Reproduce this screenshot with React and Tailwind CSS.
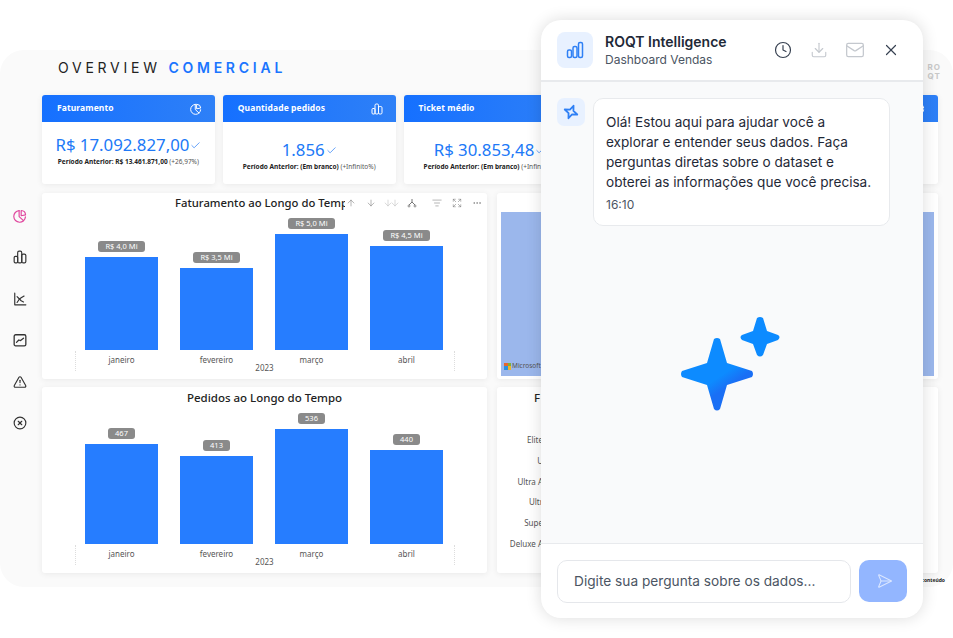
import React from "react";
import { Clock, Download, Mail, X, ArrowUp, ArrowDown, ListFilter, Expand, Ellipsis, Send, Check, TriangleAlert, CircleX } from "lucide-react";

const Sparkle = ({ className }) => (
  <svg viewBox="0 0 24 24" className={className} fill="none" stroke="currentColor" strokeWidth="2.4" strokeLinejoin="round" strokeLinecap="round">
    <path d="M12 3 L14.5 9.5 L21 12 L14.5 14.5 L12 21 L9.5 14.5 L3 12 L9.5 9.5 Z" transform="rotate(22 12 12)" />
  </svg>
);

const PieIcon = ({ size = 14, className }) => (
  <svg width={size} height={size} viewBox="0 0 24 24" fill="none" stroke="currentColor" strokeWidth="2" strokeLinecap="round" strokeLinejoin="round" className={className}>
    <path d="M10.5 2.7A10 10 0 1 0 21.3 13.5" />
    <path d="M14 2.5a8 8 0 0 1 7.5 7.5L14 11.5z" />
    <path d="M10.5 2.7V13L18 20" />
  </svg>
);

const BarsIcon = ({ size = 14, className }) => (
  <svg width={size} height={size} viewBox="0 0 24 24" fill="none" stroke="currentColor" strokeWidth="2" strokeLinejoin="round" className={className}>
    <rect x="2" y="11" width="6" height="11" rx="2" />
    <rect x="8" y="2" width="7" height="20" rx="2.5" />
    <rect x="15" y="7" width="7" height="15" rx="2.5" />
  </svg>
);

const CrossChartIcon = ({ size = 14, className }) => (
  <svg width={size} height={size} viewBox="0 0 24 24" fill="none" stroke="currentColor" strokeWidth="2" strokeLinecap="round" strokeLinejoin="round" className={className}>
    <path d="M3 2v20h19" />
    <path d="M7 8l4 4 3 3 4 2" />
    <path d="M7 18l4-6 3-2 5-3" />
  </svg>
);

const FrameChartIcon = ({ size = 14, className }) => (
  <svg width={size} height={size} viewBox="0 0 24 24" fill="none" stroke="currentColor" strokeWidth="2.2" strokeLinecap="round" strokeLinejoin="round" className={className}>
    <rect x="2" y="3" width="20" height="19" rx="2.5" />
    <path d="M6 16l4-4 3 1 5-4" />
  </svg>
);

const cards = [
  { title: "Faturamento", value: "R$ 17.092.827,00", prev: "Período Anterior: R$ 13.461.871,00", delta: "(+26,97%)", Icon: PieIcon, pad: "pt-[10px]" },
  { title: "Quantidade pedidos", value: "1.856", prev: "Período Anterior: (Em branco)", delta: "(+Infinito%)", Icon: BarsIcon, pad: "pt-[15px]" },
  { title: "Ticket médio", value: "R$ 30.853,48", prev: "Período Anterior: (Em branco)", delta: "(+Infinito%)", Icon: BarsIcon, pad: "pt-[15px]" },
  { title: "", value: "", prev: "", delta: "", Icon: null },
  { title: "", value: "", prev: "", delta: "", Icon: PieIcon },
];

const KpiCard = ({ c }) => (
  <div className="h-[89px] rounded-[3px] bg-white shadow-[0_1px_6px_rgba(0,0,0,0.07)] overflow-hidden">
    <div className="h-[27px] bg-linear-to-r from-[#1570ff] to-[#2e80f7] flex items-center justify-between pl-[15px] pr-[13px] text-white">
      <span className="text-[8.5px] font-bold tracking-[0.1px] whitespace-nowrap">{c.title}</span>
      {c.Icon && <c.Icon size={12} />}
    </div>
    {c.value && (
      <div className={`flex flex-col items-center ${c.pad}`}>
        <div className="flex items-center text-[#2079f7] text-[16.8px] leading-[26px] whitespace-nowrap">
          {c.value}
          <Check size={11} strokeWidth={1.5} className="ml-[1px]" />
        </div>
        <div className="text-[6.5px] leading-[10px] text-[#222] whitespace-nowrap -mt-[1px]">
          <span className="font-bold">{c.prev}</span> <span className="text-[#555]">{c.delta}</span>
        </div>
      </div>
    )}
  </div>
);

const Bar = ({ label, month, h }) => (
  <div className="w-[73px] flex flex-col items-center justify-end">
    <div className="px-[7px] h-[11px] text-center rounded-[3px] bg-[#8a8a8a] text-white text-[7.5px] leading-[11px] mb-[5px] whitespace-nowrap">{label}</div>
    <div className="w-[73px] bg-[#267dff]" style={{ height: h }} />
    <div className="h-[16px] pt-[4px] text-[8px] leading-[10px] translate-y-[1px] text-[#555] whitespace-nowrap">{month}</div>
  </div>
);

const Chart = ({ title, bars, toolbar }) => (
  <div className="relative h-[186px] bg-white rounded-[3px] shadow-[0_1px_6px_rgba(0,0,0,0.07)]">
    {toolbar ? (
      <div className="h-[18px] mt-[1px] pl-[133px] text-[11.3px] font-medium leading-[18px] text-[#222]">
        <div className="w-[170px] overflow-hidden whitespace-nowrap">{title}</div>
      </div>
    ) : (
      <div className="h-[19px] pt-[2px] text-center text-[11.5px] font-medium leading-[18px] text-[#222]">{title}</div>
    )}
    {toolbar && (
      <div className="absolute top-[5px] right-[5px] flex items-center text-[#777]">
        <ArrowUp size={10} strokeWidth={1.3} className="mr-[10px]" />
        <ArrowDown size={10} strokeWidth={1.3} className="mr-[7px]" />
        <div className="flex mr-[7px] text-[#bbb]"><ArrowDown size={10} strokeWidth={1.3} className="-mr-[3px]" /><ArrowDown size={10} strokeWidth={1.3} /></div>
        <svg width="10" height="10" viewBox="0 0 10 10" fill="none" stroke="currentColor" className="mr-[15px]"><path d="M5 1v3M5 4 2 7M5 4l3 3" strokeWidth="1" /><circle cx="2" cy="8" r="1" strokeWidth="0.8" /><circle cx="8" cy="8" r="1" strokeWidth="0.8" /></svg>
        <ListFilter size={10} strokeWidth={1.3} className="mr-[10px]" />
        <Expand size={10} strokeWidth={1.3} className="mr-[10px]" />
        <Ellipsis size={10} strokeWidth={1.5} />
      </div>
    )}
    <div className="h-[154px] flex justify-between items-end pl-[43px] pr-[44px]">
      {bars.map((b) => <Bar key={b.month} {...b} />)}
    </div>
    <div className="-mt-[3px] h-[10px] text-center text-[8px] leading-[10px] text-[#555]">2023</div>
    <div className="absolute left-[33px] bottom-[8px] h-[20px] border-l border-dotted border-[#ddd]" />
    <div className="absolute right-[32px] bottom-[8px] h-[20px] border-l border-dotted border-[#ddd]" />
  </div>
);

const nav = [
  [PieIcon, "text-[#e0479e]"],
  [BarsIcon, "text-[#333]"],
  [CrossChartIcon, "text-[#333]"],
  [FrameChartIcon, "text-[#333]"],
  [TriangleAlert, "text-[#333]"],
  [CircleX, "text-[#333]"],
];

const axis = ["Elite", "U", "Ultra A", "Ultr", "Supe", "Deluxe A"];

export default function App() {
  return (
    <div className="relative w-[953px] h-[638px] overflow-hidden bg-white font-['Inter',sans-serif]">
      <div className="pt-[50px] h-[587px]">
        <div className="h-[537px] rounded-[24px] bg-[#fafafa] flex">
          {/* side nav */}
          <div className="w-[42px] pt-[159px] flex flex-col items-center gap-[27.4px] shrink-0 pr-[2px]">
            {nav.map(([I, c], i) => <I key={i} size={14} strokeWidth={2} className={c} />)}
          </div>
          <div className="w-[896px] shrink-0 font-['Noto_Sans',sans-serif]">
            <div className="h-[45px] pl-[16px] pt-[8px] flex justify-between text-[14px] leading-[20px] tracking-[3.75px] font-['Inter',sans-serif] text-[#222]">
              <div>OVERVIEW <span className="font-semibold text-[#1a75ff]">COMERCIAL</span></div>
              <div className="-mr-[3px] mt-[5px] text-[8px] leading-[9px] font-bold tracking-[1px] text-[#c8c8c8] whitespace-pre">RO{"\n"}QT</div>
            </div>
            <div className="grid grid-cols-5 gap-[8px]">
              {cards.map((c, i) => <KpiCard key={i} c={c} />)}
            </div>
            <div className="mt-[9px] grid grid-cols-[445px_441px] gap-x-[10px] gap-y-[8px]">
              <Chart toolbar title="Faturamento ao Longo do Tempo" bars={[
                { label: "R$ 4,0 Mi", month: "janeiro", h: 93 },
                { label: "R$ 3,5 Mi", month: "fevereiro", h: 82 },
                { label: "R$ 5,0 Mi", month: "março", h: 116 },
                { label: "R$ 4,5 Mi", month: "abril", h: 104 },
              ]} />
              <div className="relative h-[186px] bg-white rounded-[3px] shadow-[0_1px_6px_rgba(0,0,0,0.07)] px-[4px] pt-[19px] pb-[3px]">
                <div className="relative h-full bg-[#9bb7ec]">
                  <div className="absolute left-[3px] bottom-[6px] flex items-center gap-[1px] text-[6.5px] leading-[8px] text-[#555]">
                    <span className="grid grid-cols-2 w-[7px] h-[7px]">
                      <i className="bg-[#e8662c]" /><i className="bg-[#7fb03a]" /><i className="bg-[#2a8fe0]" /><i className="bg-[#f0b429]" />
                    </span>
                    Microsoft
                  </div>
                </div>
              </div>
              <Chart title="Pedidos ao Longo do Tempo" bars={[
                { label: "467", month: "janeiro", h: 100 },
                { label: "413", month: "fevereiro", h: 88 },
                { label: "536", month: "março", h: 115 },
                { label: "440", month: "abril", h: 94 },
              ]} />
              <div className="h-[186px] bg-white rounded-[3px] shadow-[0_1px_6px_rgba(0,0,0,0.07)]">
                <div className="text-[11.5px] font-medium leading-[18px] text-[#222] pl-[37px] pt-[2px]">F</div>
                <div className="mt-[27px] w-[46px] flex flex-col items-end gap-[9.8px]">
                  {axis.map((a) => <div key={a} className="text-[8px] leading-[11px] text-[#555] whitespace-nowrap">{a}</div>)}
                </div>
              </div>
            </div>
            <div className="mt-[4px] -mr-[7px] text-right text-[5px] leading-[7px] font-bold text-[#222]">conteúdo</div>
          </div>
        </div>
      </div>

      {/* chat panel */}
      <div className="absolute left-[541px] top-[20px] w-[382px] h-[598px] rounded-[20px] bg-white shadow-[0_0_16px_rgba(0,0,0,0.14)] overflow-hidden flex flex-col text-[#111827]">
        <div className="h-[62px] shrink-0 border-b-2 border-[#e8eaed] flex items-center pl-[16px] pr-[23px]">
          <div className="w-[36px] h-[36px] rounded-[8px] bg-[#e8f1ff] flex items-center justify-center text-[#2f80f5]">
            <svg width="18" height="18" viewBox="0 0 18 18" fill="none" stroke="currentColor" strokeWidth="1.5">
              <rect x="1.5" y="9" width="4" height="7.5" rx="1.5" />
              <rect x="7" y="5.5" width="4" height="11" rx="1.5" />
              <rect x="12.5" y="1.5" width="4" height="15" rx="1.5" />
            </svg>
          </div>
          <div className="ml-[12px] flex-1">
            <div className="text-[14px] leading-[18px] font-semibold text-[#1f2937]">ROQT Intelligence</div>
            <div className="text-[12px] leading-[17px] text-[#4b5563]">Dashboard Vendas</div>
          </div>
          <Clock size={18} strokeWidth={1.6} className="text-[#374151]" />
          <Download size={18} strokeWidth={1.5} className="ml-[18px] text-[#c4c8ce]" />
          <Mail size={20} strokeWidth={1.5} className="ml-[17px] text-[#c4c8ce]" />
          <X size={18} strokeWidth={1.6} className="ml-[17px] text-[#374151]" />
        </div>
        <div className="relative flex-1 bg-[#f9fafb] pl-[16px] pt-[16px] border-b border-[#e8eaed] flex items-start">
          <div className="w-[28px] h-[28px] rounded-[7px] bg-[#e8f1ff] flex items-center justify-center text-[#2f80f5] shrink-0">
            <Sparkle className="w-[18px] h-[18px]" />
          </div>
          <div className="ml-[8px] w-[297px] h-[128px] rounded-[10px] bg-white border border-[#e8eaed] pl-[12px] pt-[13px]">
            <div className="text-[13.6px] leading-[20px] text-[#1f2937] whitespace-nowrap">
              Olá! Estou aqui para ajudar você a<br />explorar e entender seus dados. Faça<br />perguntas diretas sobre o dataset e<br />obterei as informações que você precisa.
            </div>
            <div className="mt-[5px] text-[12px] leading-[16px] text-[#4b5563]">16:10</div>
          </div>
          <svg className="absolute left-[139px] top-[235px]" width="101" height="95" viewBox="0 0 101 95">
            <defs>
              <linearGradient id="sg" x1="0.3" y1="0.3" x2="0.7" y2="0.9">
                <stop offset="0.45" stopColor="#0d8bff" />
                <stop offset="0.7" stopColor="#1a6ff5" />
              </linearGradient>
            </defs>
            <path d="M34 22 Q37 20 40 22 L47 46 L72 54 Q74 57 72 60 L47 68 L40 92 Q37 95 34 92 L27 68 L2 60 Q0 57 2 54 L27 46 Z" fill="url(#sg)" />
            <path d="M77 1 Q80 -1 83 1 L87 14 L98 18 Q101 20 98 23 L87 27 L83 38 Q80 41 77 38 L73 27 L62 23 Q59 20 62 18 L73 14 Z" fill="#0d8bff" />
          </svg>
        </div>
        <div className="h-[74px] shrink-0 flex items-start pl-[16px] pt-[16px]">
          <div className="w-[294px] h-[43px] rounded-[10px] border border-[#e5e7eb] bg-white flex items-center pl-[16px] text-[13.7px] text-[#4b5563]">
            Digite sua pergunta sobre os dados...
          </div>
          <div className="ml-[8px] w-[48px] h-[42px] rounded-[10px] bg-[#93b6ff] flex items-center justify-center text-[#dbe7ff]">
            <Send size={16} strokeWidth={1.5} className="rotate-45 -translate-x-[1px]" />
          </div>
        </div>
      </div>
    </div>
  );
}
